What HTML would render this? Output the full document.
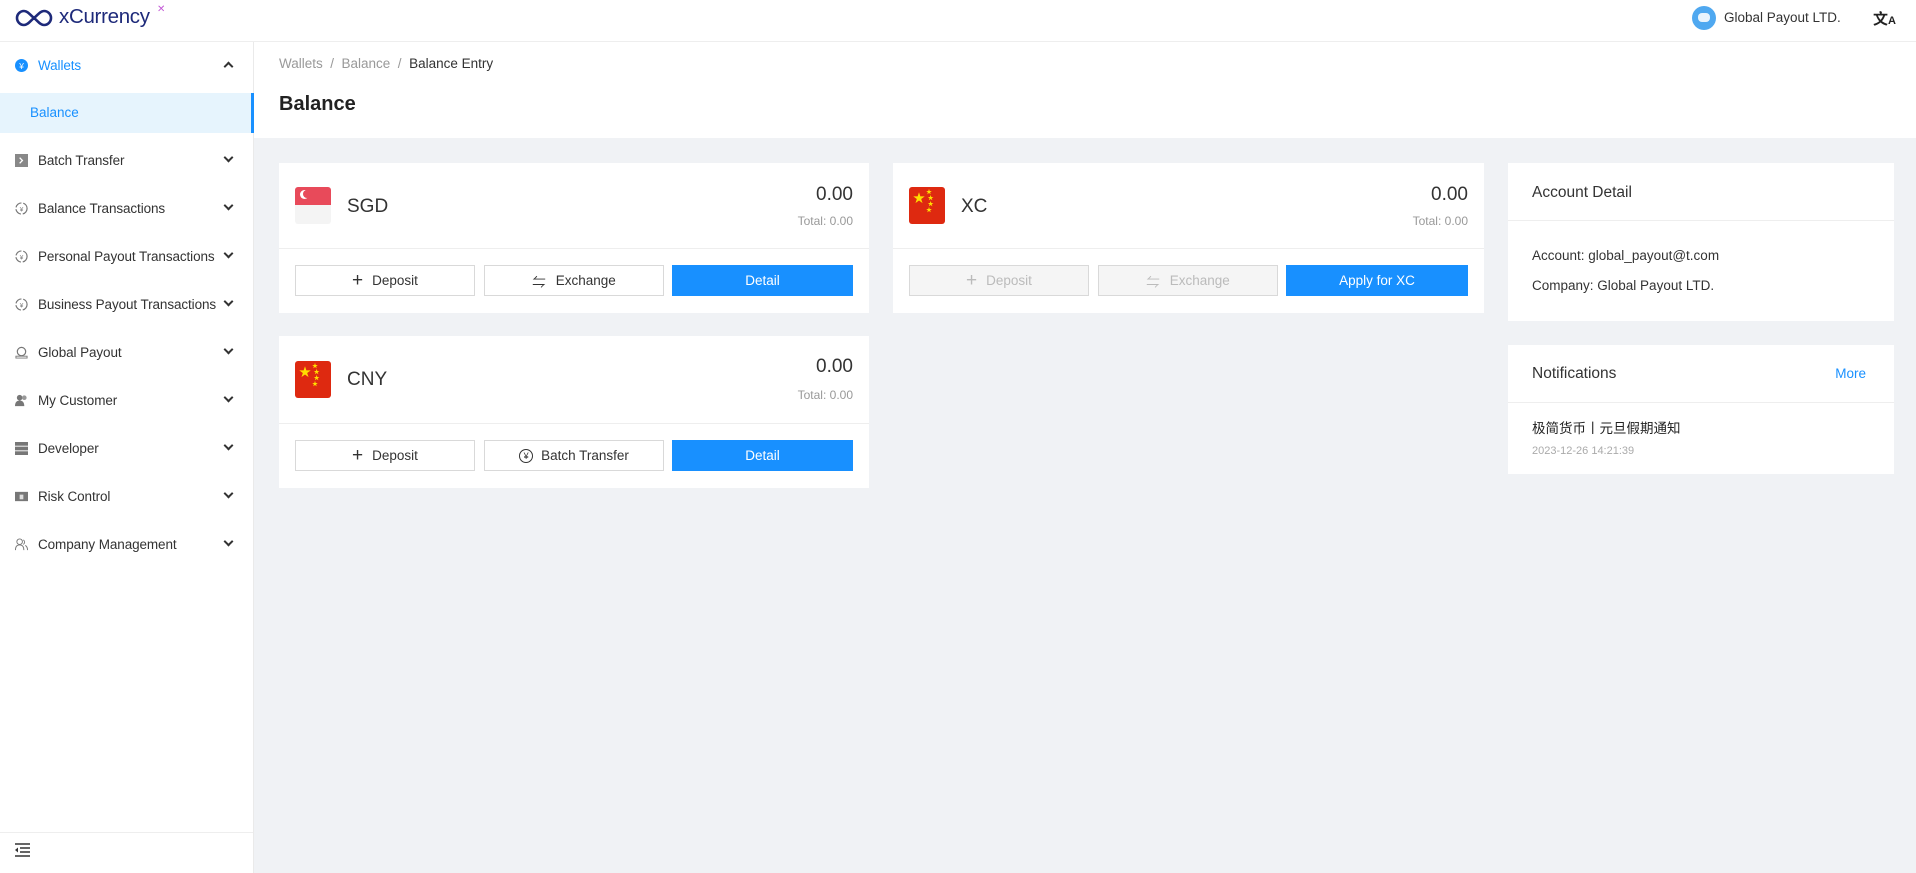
<!DOCTYPE html>
<html><head><meta charset="utf-8"><style>
*{box-sizing:border-box;margin:0;padding:0}
body{width:1916px;height:873px;overflow:hidden;background:#f0f2f5;font-family:"Liberation Sans","Noto Sans CJK SC",sans-serif;color:#333;position:relative}
.hdr{position:absolute;left:0;top:0;width:1916px;height:42px;background:#fff;border-bottom:1px solid #eee;z-index:3}
.side{position:absolute;left:0;top:42px;width:254px;height:831px;background:#fff;border-right:1px solid #eaeaea}
.mi{position:absolute;left:0;width:254px;height:40px;display:flex;align-items:center;font-size:13.5px;color:#333;letter-spacing:-0.1px}
.mi .ic{position:absolute;left:15px;width:13px;height:13px}
.mi .t{position:absolute;left:38px}
.mi .ch{position:absolute;left:225px;top:14px;width:7px;height:7px;border-right:2px solid #333;border-bottom:2px solid #333;transform:rotate(45deg)}
.top{position:absolute;left:254px;top:42px;width:1662px;height:96px;background:#fff}
.card{position:absolute;background:#fff}
.btn{position:absolute;height:31px;border:1px solid #d9d9d9;background:#fff;font-size:13.5px;display:flex;align-items:center;justify-content:center;color:#333}
.btn.p{background:#1890ff;border-color:#1890ff;color:#fff}
.btn.d{background:#f5f5f5;color:#bbb}
.amt{position:absolute;right:16px;font-size:19px;color:#333}
.tot{position:absolute;right:16px;font-size:12px;color:#999}
.cur{position:absolute;font-size:19px;color:#333}
.line{position:absolute;left:0;right:0;height:1px;background:#eee}
</style></head><body>
<div class="hdr">
 <svg style="position:absolute;left:14px;top:8px" width="40" height="20" viewBox="0 0 40 20"><path d="M10 3a7 7 0 1 0 0 14c4 0 6-4 10-7s6-7 10-7a7 7 0 1 1 0 14c-4 0-6-4-10-7S14 3 10 3z" fill="none" stroke="#1e2a7a" stroke-width="2.6"/></svg>
 <span style="position:absolute;left:59px;top:5px;font-size:20.5px;color:#1e2a7a;letter-spacing:-0.3px">xCurrency</span>
 <span style="position:absolute;left:157px;top:4px;font-size:10px;color:#c35ad6">✕</span>
 <div style="position:absolute;left:1692px;top:6px;width:24px;height:24px;border-radius:50%;background:#4fa8f0"><div style="position:absolute;left:6px;top:7px;width:12px;height:9px;border-radius:4px;background:#e8f3fd"></div></div>
 <span style="position:absolute;left:1724px;top:10px;font-size:13.5px;color:#333">Global Payout LTD.</span>
 <span style="position:absolute;left:1873px;top:8px;font-size:15px;font-weight:bold;color:#222">文<span style="font-size:11px">A</span></span>
</div>
<div class="side">
 <div class="mi" style="top:3px"><svg class="ic" viewBox="0 0 14 14"><circle cx="7" cy="7" r="7" fill="#1890ff"/><text x="7" y="10.5" font-size="9" fill="#fff" text-anchor="middle">¥</text></svg><span class="t" style="color:#1890ff">Wallets</span><span class="ch" style="transform:rotate(-135deg);top:18px;border-color:#333"></span></div>
 <div style="position:absolute;top:51px;left:0;width:254px;height:40px;background:#e6f4fd;border-right:3px solid #1890ff"><span style="position:absolute;left:30px;top:12px;font-size:13.5px;color:#1890ff">Balance</span></div>
 <div class="mi" style="top:98px"><svg class="ic" viewBox="0 0 14 14"><rect width="14" height="14" fill="#888"/><path d="M5 4l3 3-3 3" stroke="#fff" fill="none" stroke-width="1.4"/></svg><span class="t">Batch Transfer</span><span class="ch"></span></div>
 <div class="mi" style="top:146px"><svg class="ic" viewBox="0 0 14 14"><circle cx="7" cy="7" r="6" fill="none" stroke="#777" stroke-width="1.3" stroke-dasharray="8 2"/><text x="7" y="10" font-size="7" fill="#777" text-anchor="middle">¥</text></svg><span class="t">Balance Transactions</span><span class="ch"></span></div>
 <div class="mi" style="top:194px"><svg class="ic" viewBox="0 0 14 14"><circle cx="7" cy="7" r="6" fill="none" stroke="#777" stroke-width="1.3" stroke-dasharray="8 2"/><text x="7" y="10" font-size="7" fill="#777" text-anchor="middle">¥</text></svg><span class="t">Personal Payout Transactions</span><span class="ch"></span></div>
 <div class="mi" style="top:242px"><svg class="ic" viewBox="0 0 14 14"><circle cx="7" cy="7" r="6" fill="none" stroke="#777" stroke-width="1.3" stroke-dasharray="8 2"/><text x="7" y="10" font-size="7" fill="#777" text-anchor="middle">¥</text></svg><span class="t">Business Payout Transactions</span><span class="ch"></span></div>
 <div class="mi" style="top:290px"><svg class="ic" viewBox="0 0 14 14"><circle cx="7" cy="6" r="4.5" fill="none" stroke="#777" stroke-width="1.3"/><path d="M1 11h12v2H1z" fill="none" stroke="#777"/></svg><span class="t">Global Payout</span><span class="ch"></span></div>
 <div class="mi" style="top:338px"><svg class="ic" viewBox="0 0 14 14"><circle cx="5" cy="4" r="3" fill="#777"/><path d="M0 13c0-4 2-6 5-6s5 2 5 6z" fill="#777"/><circle cx="10" cy="4" r="2.5" fill="#999"/></svg><span class="t">My Customer</span><span class="ch"></span></div>
 <div class="mi" style="top:386px"><svg class="ic" viewBox="0 0 14 14"><rect y="0" width="14" height="4" fill="#777"/><rect y="5" width="14" height="4" fill="#777"/><rect y="10" width="14" height="4" fill="#777"/></svg><span class="t">Developer</span><span class="ch"></span></div>
 <div class="mi" style="top:434px"><svg class="ic" viewBox="0 0 14 14"><rect y="2" width="14" height="10" fill="#777"/><rect x="5" y="5" width="4" height="5" fill="#ddd"/></svg><span class="t">Risk Control</span><span class="ch"></span></div>
 <div class="mi" style="top:482px"><svg class="ic" viewBox="0 0 14 14"><circle cx="5" cy="4" r="3" fill="none" stroke="#777"/><path d="M0.5 13c0-4 2-5.5 4.5-5.5s4.5 1.5 4.5 5.5M9 2a3 3 0 0 1 0 5M11 8c2 1 2.5 3 2.5 5" fill="none" stroke="#777"/></svg><span class="t">Company Management</span><span class="ch"></span></div>
 <div style="position:absolute;left:0;top:790px;width:253px;height:1px;background:#eee"></div>
 <svg style="position:absolute;left:15px;top:801px" width="15" height="14" viewBox="0 0 15 14"><path d="M0 1h15M5 5h10M5 9h10M0 13h15" stroke="#333" stroke-width="1.4"/><path d="M0 7l3-2.5v5z" fill="#333"/></svg>
</div>
<div class="top">
 <div style="position:absolute;left:25px;top:14px;font-size:13.5px;color:#999">Wallets &nbsp;/&nbsp; Balance &nbsp;/&nbsp; <span style="color:#333">Balance Entry</span></div>
 <div style="position:absolute;left:25px;top:51px;font-size:20px;font-weight:bold;color:#222">Balance</div>
</div>

<!-- SGD -->
<div class="card" style="left:279px;top:163px;width:590px;height:150px">
 <div style="position:absolute;left:16px;top:24px;width:36px;height:37px;border-radius:3px;overflow:hidden;background:#f4f4f4"><div style="height:18px;background:#e84a5a"></div><div style="position:absolute;left:5px;top:3px;width:9px;height:9px;border-radius:50%;background:#fff"></div><div style="position:absolute;left:8px;top:3px;width:8px;height:8px;border-radius:50%;background:#e84a5a"></div></div>
 <div class="cur" style="left:68px;top:33px">SGD</div>
 <div class="amt" style="top:21px">0.00</div><div class="tot" style="top:51px">Total: 0.00</div>
 <div class="line" style="top:85px"></div>
 <div class="btn" style="left:16px;top:102px;width:180px"><b style="font-size:19px;font-weight:normal;margin-right:9px">+</b>Deposit</div>
 <div class="btn" style="left:205px;top:102px;width:180px"><span style="margin-right:10px">⇋</span>Exchange</div>
 <div class="btn p" style="left:393px;top:102px;width:181px">Detail</div>
</div>
<!-- CNY -->
<div class="card" style="left:279px;top:336px;width:590px;height:152px">
 <div style="position:absolute;left:16px;top:25px;width:36px;height:37px;border-radius:3px;background:#de2910"><span style="position:absolute;left:4px;top:2px;color:#ffde00;font-size:12px">★</span><span style="position:absolute;left:17px;top:3px;color:#ffde00;font-size:6px;line-height:6px">★<br>&nbsp;★<br>&nbsp;★<br>★</span></div>
 <div class="cur" style="left:68px;top:33px">CNY</div>
 <div class="amt" style="top:20px">0.00</div><div class="tot" style="top:52px">Total: 0.00</div>
 <div class="line" style="top:87px"></div>
 <div class="btn" style="left:16px;top:104px;width:180px"><b style="font-size:19px;font-weight:normal;margin-right:9px">+</b>Deposit</div>
 <div class="btn" style="left:205px;top:104px;width:180px"><span style="display:inline-block;width:14px;height:14px;border:1.3px solid #333;border-radius:50%;font-size:9px;text-align:center;line-height:12px;margin-right:8px">¥</span>Batch Transfer</div>
 <div class="btn p" style="left:393px;top:104px;width:181px">Detail</div>
</div>
<!-- XC -->
<div class="card" style="left:893px;top:163px;width:591px;height:150px">
 <div style="position:absolute;left:16px;top:24px;width:36px;height:37px;border-radius:3px;background:#de2910"><span style="position:absolute;left:4px;top:2px;color:#ffde00;font-size:12px">★</span><span style="position:absolute;left:17px;top:3px;color:#ffde00;font-size:6px;line-height:6px">★<br>&nbsp;★<br>&nbsp;★<br>★</span></div>
 <div class="cur" style="left:68px;top:33px">XC</div>
 <div class="amt" style="top:21px">0.00</div><div class="tot" style="top:51px">Total: 0.00</div>
 <div class="line" style="top:85px"></div>
 <div class="btn d" style="left:16px;top:102px;width:180px"><b style="font-size:19px;font-weight:normal;margin-right:9px">+</b>Deposit</div>
 <div class="btn d" style="left:205px;top:102px;width:180px"><span style="margin-right:10px">⇋</span>Exchange</div>
 <div class="btn p" style="left:393px;top:102px;width:182px">Apply for XC</div>
</div>
<!-- Account -->
<div class="card" style="left:1508px;top:163px;width:386px;height:158px">
 <div style="position:absolute;left:24px;top:21px;font-size:15.5px;color:#333">Account Detail</div>
 <div class="line" style="top:57px"></div>
 <div style="position:absolute;left:24px;top:85px;font-size:13.5px;color:#333">Account: global_payout@t.com</div>
 <div style="position:absolute;left:24px;top:115px;font-size:13.5px;color:#333">Company: Global Payout LTD.</div>
</div>
<div class="card" style="left:1508px;top:345px;width:386px;height:129px">
 <div style="position:absolute;left:24px;top:20px;font-size:15.5px;color:#333">Notifications</div>
 <div style="position:absolute;right:28px;top:21px;font-size:13.5px;color:#1890ff">More</div>
 <div class="line" style="top:57px"></div>
 <div style="position:absolute;left:24px;top:72px;font-size:13.5px;color:#222">极简货币丨元旦假期通知</div>
 <div style="position:absolute;left:24px;top:100px;font-size:11px;color:#aaa">2023-12-26 14:21:39</div>
</div>
</body></html>
